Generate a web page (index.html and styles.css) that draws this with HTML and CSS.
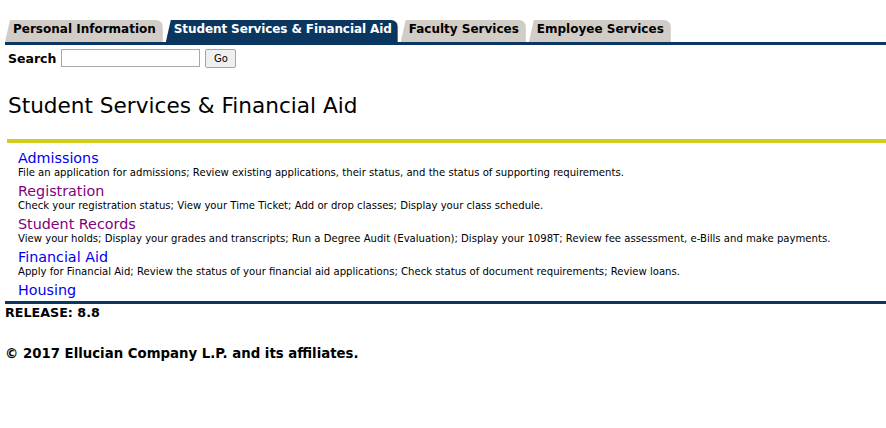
FILE: index.html
```html
<!DOCTYPE html>
<html lang="en">
<head>
    <title>Student Services &amp; Financial Aid</title>
    <link rel="stylesheet" href="styles.css">
</head>
<body>
<div class="tabbar">
    <a class="tab" href="#">Personal Information</a>
    <a class="tab active" href="#">Student Services &amp; Financial Aid</a>
    <a class="tab" href="#">Faculty Services</a>
    <a class="tab" href="#">Employee Services</a>
</div>
<form class="search">
    <label for="q">Search</label>
    <input type="text" id="q" class="search-box"/>
    <input type="submit" value="Go" class="go"/>
</form>
<h2 class="pagetitle">Student Services &amp; Financial Aid</h2>
<div class="menu">
    <div class="item">
        <a class="link" href="#">Admissions</a>
        <div class="desc">File an application for admissions; Review existing applications, their status, and the status of supporting requirements.</div>
    </div>
    <div class="item">
        <a class="link visited" href="#">Registration</a>
        <div class="desc">Check your registration status; View your Time Ticket; Add or drop classes; Display your class schedule.</div>
    </div>
    <div class="item">
        <a class="link visited" href="#">Student Records</a>
        <div class="desc">View your holds; Display your grades and transcripts; Run a Degree Audit (Evaluation); Display your 1098T; Review fee assessment, e-Bills and make payments.</div>
    </div>
    <div class="item">
        <a class="link" href="#">Financial Aid</a>
        <div class="desc">Apply for Financial Aid; Review the status of your financial aid applications; Check status of document requirements; Review loans.</div>
    </div>
    <div class="item">
        <a class="link" href="#">Housing</a>
    </div>
</div>
<div class="footer">
    <div class="release">RELEASE: 8.8</div>
    <div class="copyright">&copy; 2017 Ellucian Company L.P. and its affiliates.</div>
</div>
</body>
</html>
```

FILE: styles.css
```css
body {
    margin: 0;
    padding: 0;
    background: #fff;
    color: #000;
    font-family: "DejaVu Sans", Verdana, sans-serif;
}

.tabbar {
    display: flex;
    gap: 3px;
    margin: 20px 0 0 5px;
    border-bottom: 3px solid #0b3660;
}

.tab {
    display: block;
    height: 22px;
    line-height: 18px;
    padding: 0 7px 0 8px;
    font-size: 12px;
    font-weight: bold;
    color: #000;
    text-decoration: none;
    background: #d1cdc6;
    border-top-right-radius: 7px;
    clip-path: polygon(0 100%, 5px 0, 100% 0, 100% 100%);
}

.tab.active {
    background: #0b3660;
    color: #fff;
    padding-right: 6px;
    letter-spacing: -0.1px;
}

.search {
    display: flex;
    align-items: center;
    margin: 3px 0 0 8px;
    height: 20px;
}

.search label {
    font-size: 12.5px;
    font-weight: bold;
    margin-right: 5px;
}

.search-box {
    width: 133px;
    height: 14px;
    padding: 1px 2px;
    border: 1px solid #a9a9a9;
    margin: 0 5px 0 0;
}

.go {
    height: 19px;
    width: 31px;
    padding: 0;
    font-family: "DejaVu Sans", Verdana, sans-serif;
    font-size: 10px;
    background: #efefef;
    border: 1px solid #a5a5a5;
    border-radius: 2px;
}

.pagetitle {
    margin: 26px 0 0 8px;
    font-size: 21.6px;
    font-weight: normal;
    line-height: 24px;
}

.menu {
    margin: 21px 0 0 7px;
    border-top: 4px solid #d3ce1e;
    padding: 7px 0 0 11px;
}

.item {
    height: 33px;
}

.item:last-child {
    height: auto;
}

.link {
    display: block;
    font-size: 14.3px;
    line-height: 16px;
    color: #0000ee;
    text-decoration: none;
}

.link.visited {
    color: #800080;
}

.desc {
    font-size: 10.1px;
    line-height: 14px;
}

.footer {
    margin: 3px 0 0 5px;
    border-top: 3px solid #0b3660;
}

.release {
    font-size: 12.7px;
    font-weight: bold;
    line-height: 16px;
    margin-top: 1px;
}

.copyright {
    font-size: 13.3px;
    font-weight: bold;
    margin-top: 25px;
}
```
